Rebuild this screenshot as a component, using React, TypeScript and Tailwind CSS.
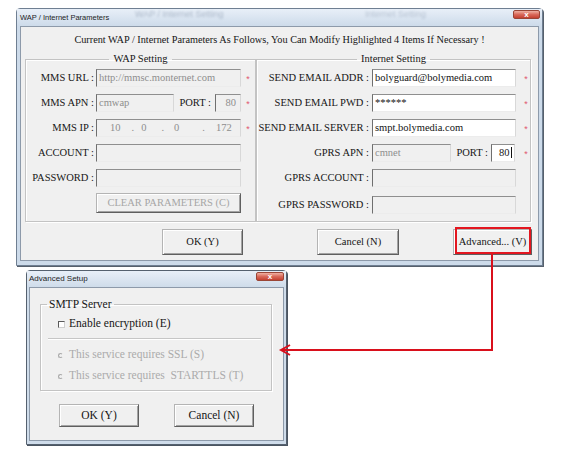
import React from "react";

const SERIF = "font-['Liberation_Serif','Times_New_Roman',serif]";
const SANS = "font-['Liberation_Sans',Arial,sans-serif]";

function CloseBox({ className }: { className: string }) {
  return (
    <div
      className={`flex items-center justify-center rounded-[2px] border border-[#9a4536] bg-gradient-to-b from-[#eeb0a2] via-[#d9695a] to-[#c4402f] text-[8px] font-bold leading-none text-white ${SANS} ${className}`}
    >
      x
    </div>
  );
}

function Field({
  w,
  white,
  children,
  className = "",
}: {
  w: string;
  white?: boolean;
  children?: React.ReactNode;
  className?: string;
}) {
  return (
    <div
      className={`flex h-[18px] shrink-0 items-center overflow-hidden whitespace-nowrap border border-b-[#ececec] border-l-[#6f6f6f] border-r-[#d8d8d8] border-t-[#8f8f8f] pl-[2px] ${
        white ? "bg-white text-[#141414]" : "bg-[#f0f0f0] text-[#8e8e8e]"
      } ${w} ${className}`}
    >
      {children}
    </div>
  );
}

function Star({ className }: { className: string }) {
  return (
    <span className={`w-[6px] shrink-0 pt-[3px] text-center text-[9px] leading-none text-[#e0566e] ${SANS} ${className}`}>
      *
    </span>
  );
}

function Btn({
  className,
  children,
  disabled,
}: {
  className: string;
  children: React.ReactNode;
  disabled?: boolean;
}) {
  return (
    <div
      className={`flex shrink-0 items-center justify-center whitespace-nowrap border border-b-[#5f5f5f] border-l-[#b4b4b4] border-r-[#5f5f5f] border-t-[#b4b4b4] bg-[#f0f0f0] shadow-[inset_1px_1px_0_#ffffff,inset_-1px_-1px_0_#a3a3a3] ${
        disabled ? "text-[#a6a6a6]" : "text-[#141414]"
      } ${className}`}
    >
      {children}
    </div>
  );
}

function Row({
  label,
  labelW,
  className = "",
  children,
}: {
  label: string;
  labelW: string;
  className?: string;
  children?: React.ReactNode;
}) {
  return (
    <div className={`flex h-[25px] items-center ${className}`}>
      <span className={`shrink-0 whitespace-nowrap text-right ${labelW}`}>{label}</span>
      {children}
    </div>
  );
}

const groupBox =
  "border border-[#c3c3c3] shadow-[inset_1px_1px_0_#ffffff,1px_1px_0_#ffffff]";

function WapParameters() {
  return (
    <div className="absolute left-[16px] top-[8px] flex h-[258px] w-[527px] flex-col rounded-t-[4px] border border-[#6f7f92] bg-[#cddbea] shadow-[1px_1px_0_#56606c]">
      {/* title bar */}
      <div className="relative flex h-[17px] items-center bg-gradient-to-b from-[#e8eff8] to-[#cddbea] pl-[3px] pr-[2px]">
        <span className={`${SANS} text-[7.5px] leading-none text-[#1e1e1e]`}>WAP / Internet Parameters</span>
        <span className={`absolute left-[118px] top-[1px] text-[9px] leading-none text-[#6a7c94] opacity-45 blur-[1.3px] ${SANS}`}>
          WAP / Internet Setting
        </span>
        <span className={`absolute left-[348px] top-[1px] text-[9px] leading-none text-[#6a7c94] opacity-35 blur-[1.3px] ${SANS}`}>
          Internet Setting
        </span>
        <CloseBox className="ml-auto mt-[1px] h-[9px] w-[27px] self-start" />
      </div>

      {/* client area */}
      <div className={`mx-[3px] mb-[4px] flex flex-1 flex-col border border-[#8d9aaa] bg-[#f0f0f0] text-[10.5px] text-[#161616] ${SERIF}`}>
        <div className="flex h-[26px] items-center justify-center whitespace-nowrap text-[10.25px]">
          Current WAP / Internet Parameters As Follows, You Can Modify Highlighted 4 Items If Necessary !
        </div>

        <div className="flex pl-[4px]">
          {/* WAP group */}
          <fieldset className={`h-[169px] w-[231px] shrink-0 ${groupBox}`}>
            <legend className="mx-auto px-[4px] leading-[12px]">WAP Setting</legend>
            <Row label="MMS URL :" labelW="w-[68px]">
              <Field w="w-[145px] ml-[2px]">http://mmsc.monternet.com</Field>
              <Star className="ml-[4px]" />
            </Row>
            <Row label="MMS APN :" labelW="w-[68px]">
              <Field w="w-[78px] ml-[2px]">cmwap</Field>
              <span className="w-[37px] shrink-0 text-right">PORT :</span>
              <Field w="w-[26px] ml-[4px]" className="justify-end pr-[4px]">
                80
              </Field>
              <Star className="ml-[4px]" />
            </Row>
            <Row label="MMS IP :" labelW="w-[68px]">
              <Field w="w-[145px] ml-[2px]">
                <span className="ml-[11px]">10</span>
                <span className="ml-[11px]">.</span>
                <span className="ml-[7px]">0</span>
                <span className="ml-[15px]">.</span>
                <span className="ml-[10px]">0</span>
                <span className="ml-[23px]">.</span>
                <span className="ml-[11px]">172</span>
              </Field>
              <Star className="ml-[4px]" />
            </Row>
            <Row label="ACCOUNT :" labelW="w-[68px]">
              <Field w="w-[145px] ml-[2px]" />
            </Row>
            <Row label="PASSWORD :" labelW="w-[68px]">
              <Field w="w-[145px] ml-[2px]" />
            </Row>
            <div className="flex h-[25px] items-center pl-[70px]">
              <Btn className="h-[20px] w-[145px]" disabled>
                CLEAR PARAMETERS (C)
              </Btn>
            </div>
          </fieldset>

          {/* Internet group */}
          <fieldset className={`h-[169px] w-[275px] shrink-0 ${groupBox}`}>
            <legend className="mx-auto px-[4px] leading-[12px]">Internet Setting</legend>
            <Row label="SEND EMAIL ADDR :" labelW="w-[112px]">
              <Field w="w-[144px] ml-[3px]" white>
                bolyguard@bolymedia.com
              </Field>
              <Star className="ml-[7px]" />
            </Row>
            <Row label="SEND EMAIL PWD :" labelW="w-[112px]">
              <Field w="w-[144px] ml-[3px]" white>
                ******
              </Field>
              <Star className="ml-[7px]" />
            </Row>
            <Row label="SEND EMAIL SERVER :" labelW="w-[112px]">
              <Field w="w-[144px] ml-[3px]" white>
                smpt.bolymedia.com
              </Field>
              <Star className="ml-[7px]" />
            </Row>
            <Row label="GPRS APN :" labelW="w-[112px]">
              <Field w="w-[79px] ml-[3px]">cmnet</Field>
              <span className="w-[37px] shrink-0 text-right">PORT :</span>
              <Field w="w-[24px] ml-[3px]" white className="pl-[7px]">
                80
                <span className="ml-[1px] h-[11px] w-px bg-[#111]" />
              </Field>
              <Star className="ml-[8px]" />
            </Row>
            <Row label="GPRS ACCOUNT :" labelW="w-[112px]">
              <Field w="w-[144px] ml-[3px]" />
            </Row>
            <Row label="GPRS PASSWORD :" labelW="w-[112px]" className="mt-[2px]">
              <Field w="w-[144px] ml-[3px]" />
            </Row>
          </fieldset>
        </div>

        {/* dialog buttons */}
        <div className="flex pt-[7px]">
          <Btn className="ml-[141px] h-[26px] w-[81px]">OK (Y)</Btn>
          <Btn className="ml-[74px] h-[26px] w-[82px]">Cancel (N)</Btn>
          <div className="relative ml-[54px] h-[26px] w-[79px]">
            <Btn className="h-full w-full">Advanced... (V)</Btn>
            <div className="absolute left-[2px] top-[-2px] h-[27px] w-[76px] border-2 border-[#e3161f]" />
          </div>
        </div>
      </div>
    </div>
  );
}

function AdvancedSetup() {
  return (
    <div className="absolute left-[26px] top-[270px] flex h-[175px] w-[261px] flex-col rounded-t-[4px] border border-[#55616f] bg-[#cfdcea] shadow-[1px_1px_0_#4b5561]">
      <div className="flex h-[16px] items-center bg-gradient-to-b from-[#e8eff8] to-[#cfdcea] pl-[2px] pr-[2px]">
        <span className={`${SANS} text-[8px] leading-none text-[#1e1e1e]`}>Advanced Setup</span>
        <CloseBox className="ml-auto mt-[1px] h-[9px] w-[28px] self-start" />
      </div>
      <div className={`mx-[2px] mb-[3px] flex flex-1 flex-col border border-[#8d9aaa] bg-[#f0f0f0] pl-[10px] pt-[9px] text-[11.5px] text-[#161616] ${SERIF}`}>
        <fieldset className={`h-[94px] w-[232px] ${groupBox}`}>
          <legend className="ml-[6px] px-[2px] leading-[14px]">SMTP Server</legend>
          <div className="mt-[5px] flex h-[16px] items-center pl-[17px]">
            <span className="h-[7px] w-[7px] shrink-0 border border-b-[#d0d0d0] border-l-[#5a5a5a] border-r-[#d0d0d0] border-t-[#5a5a5a] bg-white" />
            <span className="ml-[4px] whitespace-nowrap">Enable encryption (E)</span>
          </div>
          <div className="ml-[7px] mt-[6px] h-[2px] w-[213px] border-t border-b border-t-[#c6c6c6] border-b-white" />
          <div className="mt-[7px] flex h-[16px] items-center pl-[17px] text-[#ababab]">
            <span className="h-[5px] w-[5px] shrink-0 rounded-full border border-[#a9a9a9] border-r-transparent" />
            <span className="ml-[6px] whitespace-nowrap">This service requires SSL (S)</span>
          </div>
          <div className="mt-[5px] flex h-[16px] items-center pl-[17px] text-[#ababab]">
            <span className="h-[5px] w-[5px] shrink-0 rounded-full border border-[#a9a9a9] border-r-transparent" />
            <span className="ml-[6px] whitespace-pre">This service requires  STARTTLS (T)</span>
          </div>
        </fieldset>
        <div className="mt-[13px] flex">
          <Btn className="ml-[19px] h-[23px] w-[80px]">OK (Y)</Btn>
          <Btn className="ml-[35px] h-[23px] w-[80px]">Cancel (N)</Btn>
        </div>
      </div>
    </div>
  );
}

export default function App() {
  return (
    <div className="relative h-[466px] w-[569px] overflow-hidden bg-white">
      <WapParameters />
      <AdvancedSetup />
      {/* callout connector from the Advanced button to the setup dialog */}
      <svg className="pointer-events-none absolute inset-0" width="569" height="466" viewBox="0 0 569 466">
        <polyline points="492,254 492,350 281,350" fill="none" stroke="#d9101c" strokeWidth="2" />
        <polyline points="290,345 281,350 290,355" fill="none" stroke="#d9101c" strokeWidth="2" />
      </svg>
    </div>
  );
}
